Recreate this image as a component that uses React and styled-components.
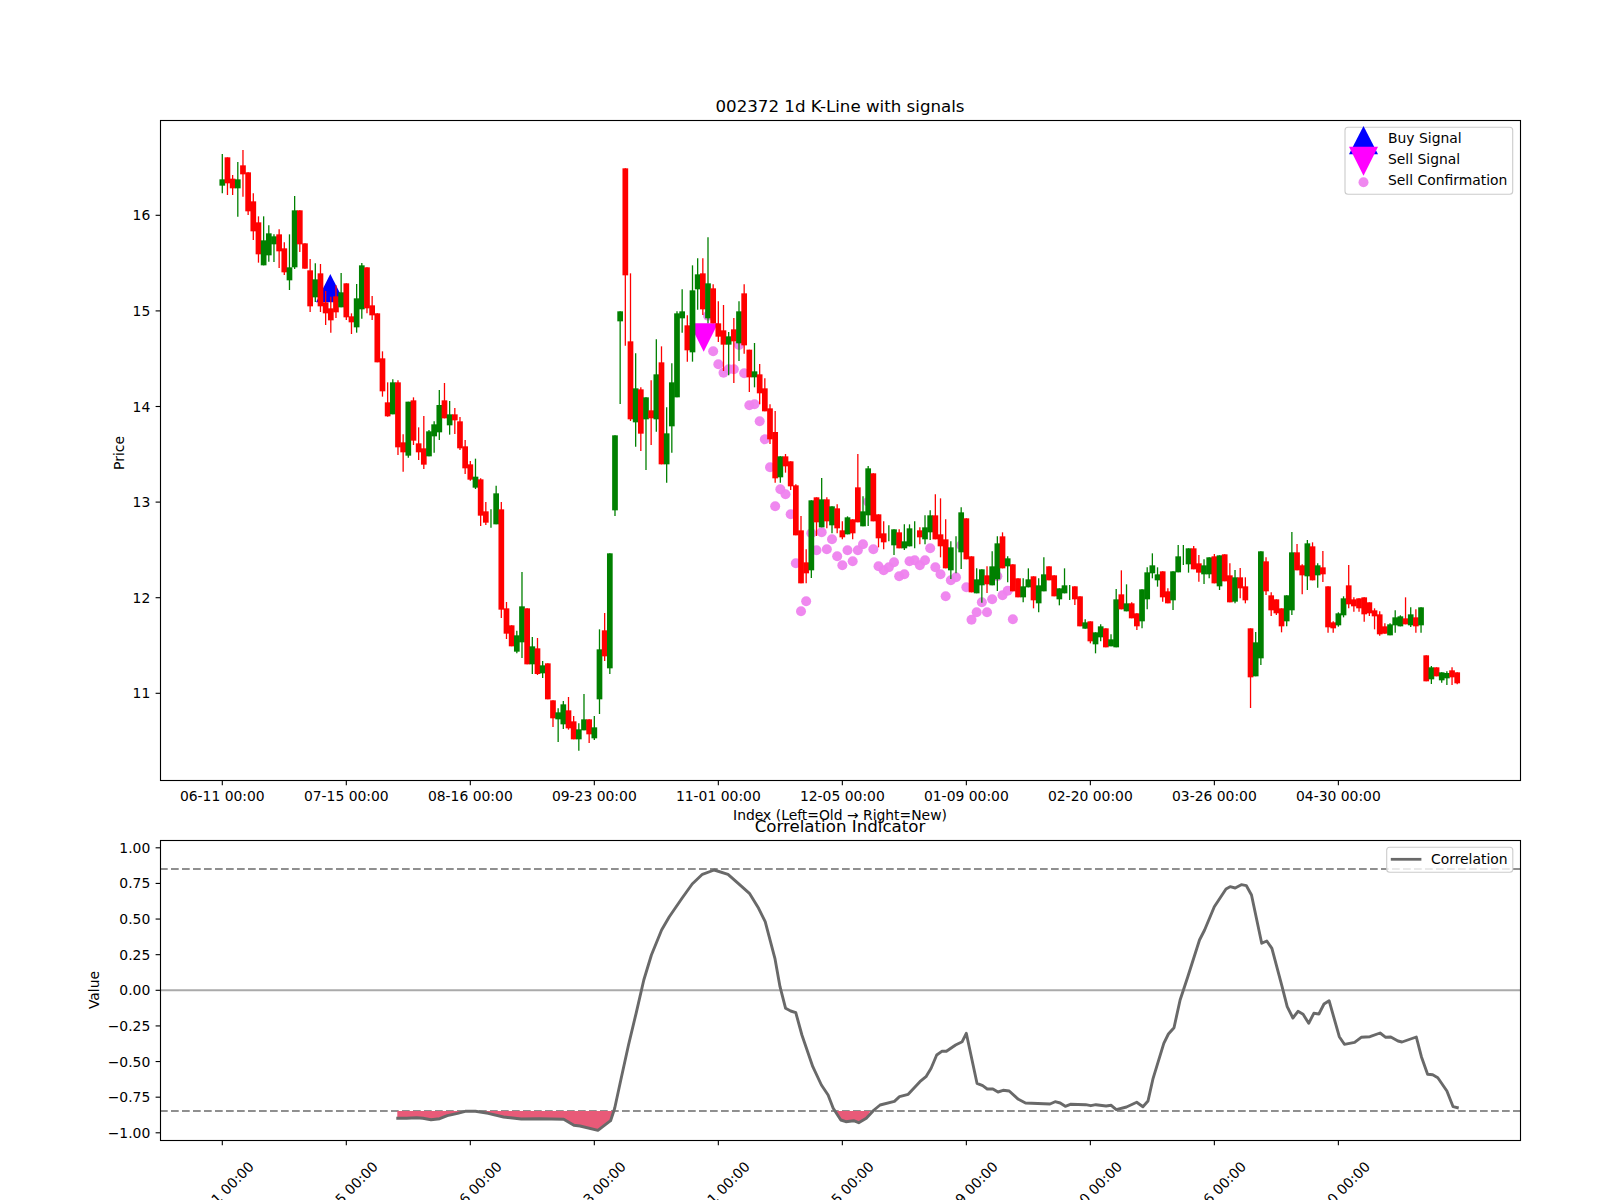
import React from 'react';
import styled, { createGlobalStyle } from 'styled-components';

const GlobalStyle = createGlobalStyle`
  html, body {
    margin: 0;
    padding: 0;
    background: #fff;
  }
`;

const Figure = styled.div`
  display: flex;
  flex-direction: column;
  width: 1600px;
  height: 1200px;
  overflow: hidden;
  background: #fff;
`;

const PricePlot = styled.svg`
  display: block;
  flex: none;
  width: 1600px;
  height: 818px;
  overflow: visible;
`;

const IndicatorPlot = styled.svg`
  display: block;
  flex: none;
  width: 1600px;
  height: 382px;
`;

const Label = styled.text`
  font-family: 'DejaVu Sans', sans-serif;
  font-size: 13.9px;
  fill: #000;
`;

const TickLabel = styled(Label)`
  text-anchor: ${(p) => p.$anchor || 'middle'};
`;

const Title = styled(Label)`
  font-size: 16.67px;
  text-anchor: middle;
`;

const AxesFrame = styled.rect`
  fill: none;
  stroke: #000;
  stroke-width: 1.11;
`;

const Tick = styled.line`
  stroke: #000;
  stroke-width: 1.11;
`;

const Wick = styled.line`
  stroke: ${(p) => (p.$up ? '#008000' : '#ff0000')};
  stroke-width: 1.3;
`;

const Body = styled.rect`
  fill: ${(p) => (p.$up ? '#008000' : '#ff0000')};
`;

const Confirmation = styled.circle`
  fill: #ee82ee;
  fill-opacity: 0.95;
`;

const Signal = styled.polygon`
  fill: ${(p) => p.$color};
`;

const LegendBox = styled.rect`
  fill: #fff;
  fill-opacity: 0.8;
  stroke: #ccc;
  stroke-width: 1.11;
`;

const LevelLine = styled.line`
  stroke: #8f8f8f;
  stroke-width: 2.08;
  stroke-dasharray: 7.7 3.3;
`;

const ZeroLine = styled.line`
  stroke: #aaa;
  stroke-width: 2.08;
`;

const Curve = styled.polyline`
  fill: none;
  stroke: #696969;
  stroke-width: 2.9;
  stroke-linejoin: round;
`;

const LegendLine = styled.line`
  stroke: #696969;
  stroke-width: 2.78;
`;

const Oversold = styled.polygon`
  fill: #e85a78;
`;

const DATES = [
  '06-11 00:00', '07-15 00:00', '08-16 00:00', '09-23 00:00', '11-01 00:00',
  '12-05 00:00', '01-09 00:00', '02-20 00:00', '03-26 00:00', '04-30 00:00',
];

const X0 = 222.3;
const STEP = 5.167;
const BODY_W = 5.7;
const LEVEL_HIGH = 869;
const LEVEL_LOW = 1111;
const xAt = (i) => X0 + i * STEP;
const priceY = (p) => 215.3 + (16 - p) * 95.6;
const valueY = (v) => 990.3 - v * 142.5;

// [colour, bodyTop, bodyBottom, wickTop, wickBottom], read off crops at 3x
const section = (top, rows) =>
  rows.map(([c, bt, bb, wt, wb]) => ({
    up: c === 'g',
    bt: top + bt / 3,
    bb: top + bb / 3,
    wt: top + wt / 3,
    wb: top + wb / 3,
  }));

const CANDLES = [
  ...section(100, [
    ['g',238,257,162,280],['r',172,250,172,285],['r',236,265,225,285],['g',238,265,186,350],
    ['r',196,223,150,290],['r',217,334,217,345],['r',304,394,280,420],['r',367,463,349,488],
    ['g',421,496,349,496],['g',400,466,376,485],['g',409,433,403,486],['r',403,454,388,504],
    ['r',445,517,427,525],['g',502,541,403,570],['g',331,502,288,507],['r',331,433,331,456],
    ['r',430,506,430,506],['r',511,619,477,636],['g',538,592,490,606],['r',520,619,492,636],
    ['r',607,640,573,675],['r',625,661,590,698],['r',589,637,556,654],['g',577,622,519,622],
    ['r',550,652,550,660],['r',649,667,640,702],['g',595,682,552,698],['g',496,628,489,656],
    ['r',502,625,502,640],['r',616,646,588,660],['r',640,787,640,787],['r',775,874,754,890],
    ['r',907,949,847,950],['g',847,943,838,943],
  ]),
  ...section(430, [
    ['r',-143,52,-149,75],['r',37,67,13,125],['g',-85,77,-85,83],['r',-89,32,-98,45],
    ['r',40,67,-8,90],['r',55,104,-42,117],['g',4,79,0,79],['g',-17,19,-26,68],
    ['g',-75,7,-120,30],['r',-89,-35,-141,-35],['g',-47,-14,-87,14],['r',-47,-29,-66,12],
    ['r',-26,55,-39,60],['r',49,115,30,132],['r',103,149,93,152],['g',140,173,86,177],
    ['r',148,257,145,288],['r',244,278,216,285],['g',280,280,238,293],['g',190,283,167,283],
    ['r',238,539,216,564],['r',535,611,516,627],['r',586,649,586,649],['g',616,665,602,670],
    ['g',529,637,426,684],['r',535,703,535,703],['g',649,703,621,732],['r',655,732,624,735],
    ['g',706,730,693,744],['r',700,808,700,808],['r',811,865,811,891],['g',847,868,835,936],
    ['g',823,883,813,897],['r',841,895,801,899],['r',874,928,858,928],['g',898,928,880,962],
    ['g',868,901,792,901],['r',868,913,868,939],['g',892,925,858,930],['g',658,808,598,852],
    ['r',601,679,549,693],['g',370,715,370,732],['g',16,241,16,258],
  ]),
  ...section(150, [
    ['g',484,514,484,762],['r',55,376,55,587],['r',574,808,370,813],['g',715,817,610,890],
    ['r',718,851,712,903],['g',742,808,742,960],['r',781,805,691,885],['g',673,808,568,845],
    ['r',637,943,589,943],['g',850,943,772,998],['g',697,829,640,908],['g',490,742,484,742],
    ['g',484,505,418,548],['r',526,601,496,635],['g',421,607,346,635],['g',373,418,325,479],
    ['r',370,478,325,495],['g',400,505,262,520],['r',415,520,403,520],['r',520,560,454,576],
    ['r',541,584,465,663],['g',559,584,546,676],['r',538,574,504,699],['g',484,580,454,633],
    ['r',430,586,403,611],['r',599,682,599,726],['g',664,682,579,712],['r',673,730,642,763],
    ['r',715,784,685,784],['r',775,868,763,882],
  ]),
  ...section(440, [
    ['r',-24,115,-87,128],['g',49,112,49,128],['r',49,79,42,98],['r',64,139,64,150],
    ['r',136,286,133,286],['r',271,430,228,430],['r',367,400,328,430],['g',181,391,181,414],
    ['r',172,247,172,288],['g',178,262,114,262],['r',178,244,172,265],['g',199,256,199,280],
    ['r',205,265,193,280],['r',271,292,244,298],['g',232,283,229,283],['r',238,280,238,298],
    ['r',142,247,42,247],['g',214,259,169,259],['g',85,226,78,258],['r',100,244,100,244],
    ['r',223,295,223,322],['r',280,307,244,328],['g',290,290,256,304],['g',268,316,268,345],
    ['r',277,325,268,325],['g',304,325,253,330],['g',265,319,253,319],['g',300,300,244,325],
    ['r',271,292,262,313],['g',262,298,226,313],['g',226,277,211,300],['r',226,298,163,298],
    ['r',283,319,175,352],['r',298,385,238,385],['g',322,391,304,417],['g',350,350,289,400],
    ['g',217,337,202,387],['r',235,358,235,358],['r',349,457,349,457],['g',418,460,385,460],
    ['g',388,436,388,488],['r',406,433,379,459],['g',379,436,334,436],['g',310,418,289,453],
    ['r',289,385,277,385],['g',355,379,349,427],['r',373,454,373,454],['r',415,472,415,472],
    ['g',439,472,415,487],['g',418,442,385,442],['r',409,481,409,505],['g',436,490,415,517],
    ['g',403,454,352,454],['r',379,421,379,421],['r',406,469,406,469],['g',445,478,445,496],
    ['g',436,460,385,460],['g',460,460,435,480],['r',439,478,439,495],['r',469,559,469,559],
    ['g',547,566,538,566],['r',544,604,544,610],['g',577,613,577,640],['g',559,592,553,604],
    ['r',565,622,565,622],['g',598,619,583,619],['g',478,622,447,622],['r',463,508,391,508],
    ['g',490,514,433,514],['r',490,535,487,535],['r',520,559,520,570],['g',448,544,448,565],
    ['g',397,478,382,508],['g',376,400,340,415],
  ]),
  ...section(500, [
    ['g',223,241,202,260],['r',214,292,214,305],['r',274,310,265,310],['g',214,301,214,330],
    ['g',169,217,135,217],['g',165,165,135,195],['g',145,193,145,218],['r',145,208,138,208],
    ['r',190,218,165,245],['g',196,223,178,252],['g',172,223,172,235],['r',169,250,162,250],
    ['g',166,259,166,270],['r',163,244,163,244],['r',226,307,190,307],['g',232,305,210,310],
    ['r',232,265,204,295],['r',259,301,232,310],['r',385,532,385,624],['g',427,529,396,529],
    ['g',154,475,154,495],['r',184,274,172,285],['r',286,331,277,348],['r',298,340,298,345],
    ['r',325,379,325,397],['g',286,364,286,379],['g',157,331,96,345],['r',157,211,132,211],
    ['r',196,226,193,283],['g',130,229,120,270],['r',139,241,127,241],['g',196,226,190,263],
    ['r',202,223,153,246],['r',259,382,259,398],['r',367,385,364,398],['g',340,376,337,380],
    ['g',295,346,289,352],['r',256,313,195,325],['r',298,319,292,335],['r',295,325,295,335],
    ['r',292,343,292,365],['r',307,340,307,348],['r',331,349,325,388],['r',343,403,334,407],
    ['r',379,401,370,401],['g',373,406,370,406],['g',352,376,331,398],['g',349,379,346,379],
    ['r',355,373,292,373],['g',343,376,322,381],['r',352,379,328,398],['g',322,376,322,398],
    ['r',466,544,466,544],['g',502,538,498,552],['r',502,529,502,529],['g',517,541,517,548],
    ['g',519,535,514,555],['r',511,532,502,555],['r',517,550,517,553],
  ]),
];

// [candle index, y] of the sell confirmation dots
const DOTS = [
  ...[[94,497],[95,604],[96,643],[97,668],[98,658],[99,658],[100,585],[101,670],[102,766],[103,763],
    [104,814],[105,868],[106,952],[108,1018],[109,1033]].map(([i, y]) => [i, 150 + y / 3]),
  ...[[107,199],[110,223],[111,370],[112,514],[113,484],[114,280],[115,331],[116,277],[117,328],
    [118,298],[119,349],[120,376],[121,331],[122,364],[123,331],[124,313],[125,185],[126,328],
    [127,379],[128,391],[129,382],[130,367],[131,409],[132,403],[133,364],[134,361],[135,376],
    [136,361],[137,325],[138,382],[139,403],[140,469],[141,421],[142,412],[143,316],[144,442],
    [145,539],[146,517],[147,487],[148,517],[149,478],[150,409],[151,466],[152,452],[153,538]]
    .map(([i, y]) => [i, 440 + y / 3]),
];

const fromLeft = ([x, y]) => [80 + x / 1.96, 780 + y / 3];
const fromRight = ([x, y]) => [800 + x / 1.96, 780 + y / 3];

const CURVE_LEFT = [
  [620,1015],[640,1015],[660,1013],[672,1015],[688,1019],[705,1016],[720,1007],[740,1000],[755,994],
  [775,994],[800,1000],[830,1011],[865,1017],[900,1016],[948,1018],[968,1036],[980,1038],[1015,1051],
  [1040,1022],[1048,985],[1060,900],[1075,795],[1090,700],[1105,600],[1120,525],[1140,450],[1155,410],
  [1180,355],[1200,312],[1220,283],[1243,270],[1270,283],[1290,310],[1312,340],[1330,385],[1343,425],
  [1362,535],[1372,620],[1383,685],[1393,693],[1403,698],[1415,765],
].map(fromLeft);

const CURVE_RIGHT = [
  [25,860],[42,915],[55,945],[65,985],[80,1020],[90,1025],[105,1022],[115,1028],[130,1015],[145,990],
  [157,975],[185,964],[195,950],[212,943],[235,905],[247,890],[257,865],[268,825],[278,814],[287,814],
  [305,795],[318,785],[326,760],[347,910],[358,917],[367,927],[378,927],[388,936],[398,931],[410,933],
  [428,958],[442,969],[490,972],[500,965],[510,969],[520,979],[530,973],[560,974],[570,977],[580,974],
  [600,978],[610,976],[620,989],[640,981],[660,967],[672,980],[682,963],[692,895],[713,790],[722,762],
  [733,743],[745,660],[760,590],[783,480],[793,450],[812,380],[835,327],[843,320],[853,324],[865,314],
  [875,317],[885,345],[905,490],[915,483],[925,505],[945,620],[955,680],[966,714],[976,694],[986,703],
  [997,730],[1007,700],[1017,702],[1027,672],[1037,662],[1057,770],[1067,793],[1087,787],[1100,772],
  [1117,770],[1137,759],[1148,772],[1158,771],[1172,783],[1180,786],[1208,771],[1218,830],[1230,883],
  [1240,884],[1250,893],[1268,933],[1280,980],[1291,984],
].map(fromRight);

const CURVE = [...CURVE_LEFT, ...CURVE_RIGHT];

const FILL_ONE = [
  [622,993],[622,1015],[640,1015],[660,1013],[672,1015],[688,1019],[705,1016],[720,1007],[740,1000],
  [755,994],[775,994],[800,1000],[830,1011],[865,1017],[900,1016],[948,1018],[968,1036],[980,1038],
  [1015,1051],[1040,1022],[1046,993],
].map(fromLeft);

const FILL_TWO = [
  [70,993],[80,1020],[90,1025],[105,1022],[115,1028],[130,1015],[138,993],
].map(fromRight);

const toPoints = (pts) => pts.map(([x, y]) => `${x.toFixed(1)},${y.toFixed(1)}`).join(' ');

const triangle = (cx, tipY, baseY, half) => `${cx},${tipY} ${cx - half},${baseY} ${cx + half},${baseY}`;

const Candle = ({ i, up, bt, bb, wt, wb }) => {
  const x = xAt(i);
  return (
    <g>
      <Wick $up={up} x1={x} x2={x} y1={wt} y2={wb} />
      <Body $up={up} x={x - BODY_W / 2} y={bt} width={BODY_W} height={bb - bt} />
    </g>
  );
};

const XTicks = ({ y }) =>
  DATES.map((d, n) => <Tick key={d} x1={xAt(n * 24)} x2={xAt(n * 24)} y1={y} y2={y + 4.86} />);

const App = () => (
  <>
    <GlobalStyle />
    <Figure>
      <PricePlot viewBox="0 0 1600 818">
        <Title x="840" y="112">002372 1d K-Line with signals</Title>

        {DOTS.map(([i, y]) => (
          <Confirmation key={i} cx={xAt(i)} cy={y} r="5" />
        ))}
        <Signal $color="#0000ff" points={triangle(330.3, 274, 302.3, 14.3)} />
        <Signal $color="#ff00ff" points={triangle(703.7, 351.7, 323.3, 14.3)} />
        {CANDLES.map((c, i) => (
          <Candle key={i} i={i} {...c} />
        ))}

        <AxesFrame x="160.5" y="120.5" width="1360" height="660" />
        <XTicks y={780.5} />
        {DATES.map((d, n) => (
          <TickLabel key={d} x={xAt(n * 24)} y="801">{d}</TickLabel>
        ))}
        {[16, 15, 14, 13, 12, 11].map((p) => (
          <g key={p}>
            <Tick x1="155.6" x2="160.5" y1={priceY(p)} y2={priceY(p)} />
            <TickLabel $anchor="end" x="150.3" y={priceY(p) + 5}>{p}</TickLabel>
          </g>
        ))}
        <TickLabel x="0" y="0" transform="translate(124 453) rotate(-90)">Price</TickLabel>
        <TickLabel x="840" y="820">Index (Left=Old → Right=New)</TickLabel>

        <LegendBox x="1345" y="127.3" width="167.7" height="67" rx="3" />
        <Signal $color="#0000ff" points={triangle(1363.5, 126, 154.3, 14.5)} />
        <Signal $color="#ff00ff" points={triangle(1363.5, 175.7, 146.7, 14.5)} />
        <Confirmation cx="1363.5" cy="182.3" r="5" />
        <Label x="1388" y="143">Buy Signal</Label>
        <Label x="1388" y="164">Sell Signal</Label>
        <Label x="1388" y="185">Sell Confirmation</Label>
      </PricePlot>

      <IndicatorPlot viewBox="0 818 1600 382">
        <Title x="840" y="832">Correlation Indicator</Title>

        <ZeroLine x1="160" x2="1520" y1={valueY(0)} y2={valueY(0)} />
        <LevelLine x1="160" x2="1520" y1={LEVEL_HIGH} y2={LEVEL_HIGH} />
        <LevelLine x1="160" x2="1520" y1={LEVEL_LOW} y2={LEVEL_LOW} />
        <Oversold points={toPoints(FILL_ONE)} />
        <Oversold points={toPoints(FILL_TWO)} />
        <Curve points={toPoints(CURVE)} />

        <AxesFrame x="160.5" y="840.5" width="1360" height="300" />
        <XTicks y={1140.5} />
        {DATES.map((d, n) => (
          <TickLabel
            key={d}
            x="0"
            y="0"
            dominantBaseline="central"
            transform={`translate(${xAt(n * 24) - 1} 1194) rotate(-45)`}
          >
            {d}
          </TickLabel>
        ))}
        {[1, 0.75, 0.5, 0.25, 0, -0.25, -0.5, -0.75, -1].map((v) => (
          <g key={v}>
            <Tick x1="155.6" x2="160.5" y1={valueY(v)} y2={valueY(v)} />
            <TickLabel $anchor="end" x="150.3" y={valueY(v) + 5}>
              {(v < 0 ? '\u2212' : '') + Math.abs(v).toFixed(2)}
            </TickLabel>
          </g>
        ))}
        <TickLabel x="0" y="0" transform="translate(99 990) rotate(-90)">Value</TickLabel>

        <LegendBox x="1386.7" y="847.3" width="126.1" height="25" rx="3" />
        <LegendLine x1="1390.8" x2="1421.4" y1="859.3" y2="859.3" />
        <Label x="1431" y="863.5">Correlation</Label>
      </IndicatorPlot>
    </Figure>
  </>
);

export default App;
